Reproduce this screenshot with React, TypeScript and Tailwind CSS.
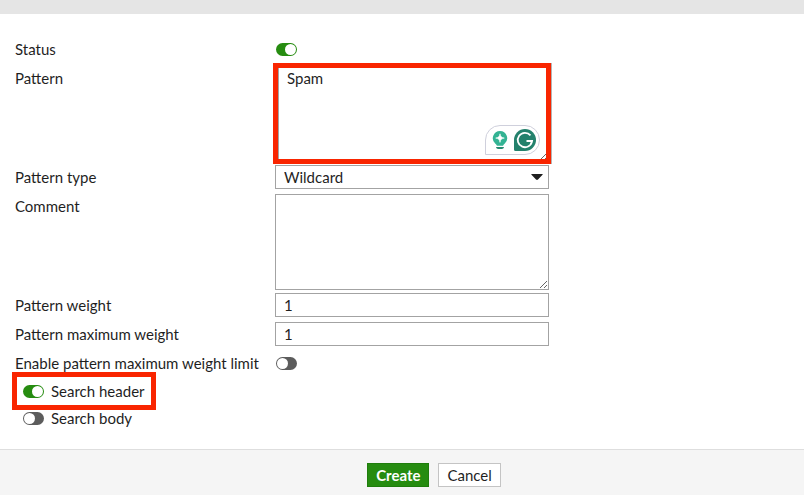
import type { InputHTMLAttributes, ReactNode } from "react";

const fieldClass =
  "block w-full border border-[#a3a3a3] bg-white text-[#1f1f1f] outline-none";

const Toggle = (props: InputHTMLAttributes<HTMLInputElement>) => (
  <input
    type="checkbox"
    role="switch"
    className="relative h-[13px] w-[21px] shrink-0 cursor-pointer appearance-none rounded-full bg-[#5c5c5c] before:absolute before:top-px before:left-px before:size-[11px] before:rounded-full before:bg-white checked:bg-[#268c10] checked:before:left-[9px]"
    {...props}
  />
);

const Row = ({
  id,
  label,
  tall,
  children,
}: {
  id: string;
  label: string;
  tall?: boolean;
  children: ReactNode;
}) => (
  <div className={tall ? "flex items-start pb-[3px]" : "flex items-start pb-[5px]"}>
    <label htmlFor={id} className="w-[260px] shrink-0 leading-6">
      {label}
    </label>
    <div className="flex min-h-6 w-full max-w-[274px] items-center">{children}</div>
  </div>
);

const ToggleRow = ({ id, label, on }: { id: string; label: string; on?: boolean }) => (
  <Row id={id} label={label}>
    <div className="flex pl-px">
      <Toggle id={id} defaultChecked={on} />
    </div>
  </Row>
);

const WritingAssistant = () => (
  <div className="absolute right-[9px] bottom-[7px] flex h-[30px] w-[55px] items-center gap-[6px] rounded-full rounded-bl-none border border-[#cfd0dc] bg-white pl-[6px]">
    <svg width="16" height="20" viewBox="0 0 16 20" aria-hidden="true">
      <path
        d="M8 1a7.2 7.2 0 0 0-4.6 12.700c.9.8 1.300 1.200 1.500 2.100h6.200c.2-.9.6-1.300 1.500-2.100A7.200 7.200 0 0 0 8 1Z"
        fill="#33b393"
      />
      <path
        d="M8 3.800c.5 2.800 1.500 3.800 4.300 4.300C9.500 8.600 8.500 9.600 8 12.400 7.500 9.600 6.500 8.600 3.700 8.100 6.500 7.600 7.500 6.600 8 3.800Z"
        fill="#fff"
        stroke="#fff"
        strokeWidth=".6"
      />
      <path d="M4 17h8c-.2 1.300-1 2-2.200 2H6.200C5 19 4.200 18.300 4 17Z" fill="#248a70" />
    </svg>
    <svg width="22" height="22" viewBox="0 0 22 22" aria-hidden="true">
      <path d="M11 0a11 11 0 1 1 0 22H1.500A1.500 1.500 0 0 1 0 20.500V11A11 11 0 0 1 11 0Z" fill="#23816c" />
      <path
        d="M16.500 6.400A7.200 7.200 0 1 0 18.100 12H12.500M18.100 12l-1.600 3.600"
        fill="none"
        stroke="#fff"
        strokeWidth="1.800"
      />
    </svg>
  </div>
);

const App = () => {
  return (
    <form
      className="flex min-h-screen flex-col bg-white font-['Lato',sans-serif] text-[15px] text-[#1f1f1f]"
      onSubmit={(e) => e.preventDefault()}
    >
      <div className="h-[14px] bg-[#e5e5e5]" />

      <div className="px-[15px] pt-[23px] pb-[19px]">
        <ToggleRow id="status" label="Status" on />
        <Row id="pattern" label="Pattern" tall>
          <div className="relative w-full">
            <textarea
              id="pattern"
              defaultValue="Spam"
              className={`${fieldClass} h-24 resize px-[11px] leading-[22px]`}
            />
            {/* highlight frame */}
            <span className="pointer-events-none absolute -inset-x-[2px] -top-[3px] -bottom-[2px] border-5 border-[#f92500] shadow-[1px_0_0_#b5b5b5,inset_1px_0_0_#a3a3a3]" />
            <WritingAssistant />
          </div>
        </Row>
        <Row id="type" label="Pattern type">
          <div className="relative w-full">
            <select id="type" className={`${fieldClass} h-6 appearance-none px-2`}>
              <option>Wildcard</option>
              <option>Regex</option>
            </select>
            <svg
              className="pointer-events-none absolute top-[9px] right-[6px]"
              width="12"
              height="6"
              viewBox="0 0 12 6"
              aria-hidden="true"
            >
              <path d="M.5 0h11q.5.300 0 .8L7 5.500q-1 .8-2 0L.5.8Q0 .3.5 0Z" fill="#1f1f1f" />
            </svg>
          </div>
        </Row>
        <Row id="comment" label="Comment" tall>
          <textarea id="comment" className={`${fieldClass} h-24 resize px-[11px] leading-[22px]`} />
        </Row>
        <Row id="weight" label="Pattern weight">
          <input id="weight" defaultValue="1" className={`${fieldClass} h-6 px-2`} />
        </Row>
        <Row id="max-weight" label="Pattern maximum weight">
          <input id="max-weight" defaultValue="1" className={`${fieldClass} h-6 px-2`} />
        </Row>
        <ToggleRow id="limit" label="Enable pattern maximum weight limit" />

        <div className="-mt-px flex flex-col items-start gap-[3px] pl-2">
          <label className="relative flex h-6 items-center gap-[7px]">
            <Toggle defaultChecked />
            Search header
            <span className="pointer-events-none absolute -inset-x-[11px] -inset-y-[7px] border-5 border-[#f92500]" />
          </label>
          <label className="flex h-6 items-center gap-[7px]">
            <Toggle />
            Search body
          </label>
        </div>
      </div>

      <div className="flex flex-1 items-start justify-center gap-[9px] border-t border-[#dedede] bg-[#f5f5f5] pt-[13px] pl-16">
        <button
          type="submit"
          className="h-6 border border-[#1f7d0c] bg-[#268c10] px-2 leading-[22px] font-bold text-white"
        >
          Create
        </button>
        <button
          type="button"
          className="h-6 border border-[#c4c4c4] bg-white px-2 leading-[22px]"
        >
          Cancel
        </button>
      </div>
    </form>
  );
};

export default App;
